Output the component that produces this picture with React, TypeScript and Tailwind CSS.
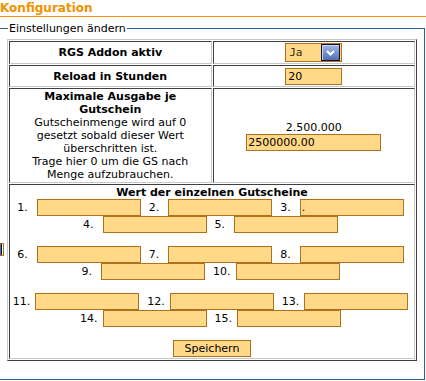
import React from "react";

const cellCls =
  "border border-t-[#404040] border-l-[#404040] border-r-[#c8c8c8] border-b-[#c8c8c8] p-[1px] text-center align-middle";

function Box({ cls, value }: { cls: string; value?: string }) {
  return (
    <div
      className={
        "h-[17px] border border-[#b0701c] bg-[#ffd987] pl-[1px] text-left text-[11px] leading-[15px] text-black whitespace-nowrap overflow-hidden " +
        cls
      }
    >
      {value}
    </div>
  );
}

export default function App() {
  const groups: (number[] | null)[] = [
    [1, 2, 3],
    [4, 5],
    null,
    [6, 7, 8],
    [9, 10],
    null,
    [11, 12, 13],
    [14, 15],
    null,
  ];
  return (
    <div className="relative w-[426px] h-[381px] overflow-hidden bg-white text-black font-['DejaVu_Sans',sans-serif] text-[11px] leading-[13px]">
      <div className="h-[17px] border-b border-[#f39100] pt-[1px] text-[12px] leading-[14px] font-bold text-[#f39100]">
        Konfiguration
      </div>
      <div className="relative mt-[11px] -ml-[2px] w-[427px] h-[352px] border border-[#2d5f94]">
        <div className="absolute -top-[7px] left-[9px] bg-white px-[1px] leading-[13px]">
          Einstellungen ändern
        </div>
        <table className="mt-[10px] ml-[8px] w-[410px] border-separate border-spacing-[1px] border border-t-[#c8c8c8] border-l-[#c8c8c8] border-r-[#404040] border-b-[#404040]">
          <tbody>
            <tr>
              <td className={cellCls + " w-1/2 font-bold"}>RGS Addon aktiv</td>
              <td className={cellCls + " w-1/2"}>
                <div className="mx-auto flex h-[19px] w-[57px] items-center border border-[#b0701c] bg-[#ffd987]">
                  <span className="flex-1 pl-[3px] text-left font-['DejaVu_Sans_Mono',monospace] text-[11px] leading-[13px] text-[#3a2a10]">
                    Ja
                  </span>
                  <div className="mr-[1px] flex h-[17px] w-[19px] items-center justify-center border border-[#101030] bg-linear-to-b from-[#a3b8e8] to-[#4f70b6] shadow-[inset_1px_1px_0_#c8d6f4]">
                    <svg width="9" height="6" viewBox="0 0 9 6">
                      <polyline
                        points="1,1 4.5,4.5 8,1"
                        fill="none"
                        stroke="#ffffff"
                        strokeWidth="2"
                      />
                    </svg>
                  </div>
                </div>
              </td>
            </tr>
            <tr>
              <td className={cellCls + " font-bold"}>Reload in Stunden</td>
              <td className={cellCls + " h-[22px]"}>
                <Box cls="mx-auto w-[57px] pl-[2px]" value="20" />
              </td>
            </tr>
            <tr>
              <td className={cellCls}>
                <div className="font-bold">
                  Maximale Ausgabe je
                  <br />
                  Gutschein
                </div>
                <div>
                  Gutscheinmenge wird auf 0
                  <br />
                  gesetzt sobald dieser Wert
                  <br />
                  überschritten ist.
                  <br />
                  Trage hier 0 um die GS nach
                  <br />
                  Menge aufzubrauchen.
                </div>
              </td>
              <td className={cellCls}>
                <div>2.500.000</div>
                <Box cls="mx-auto w-[135px]" value="2500000.00" />
              </td>
            </tr>
            <tr>
              <td className={cellCls} colSpan={2}>
                <div className="font-bold">Wert der einzelnen Gutscheine</div>
                {groups.map((g, gi) =>
                  g === null ? (
                    <div key={gi} className="h-[13px]" />
                  ) : (
                    <div key={gi} className="flex h-[17px] items-center justify-center pr-[3px]">
                      {g.map((n, i) => (
                        <React.Fragment key={n}>
                          <span
                            className={
                              (i > 0 ? "ml-[8px] " : "") +
                              (n < 10 ? "mr-[9px]" : "mr-[5px]")
                            }
                          >
                            {n}.
                          </span>
                          <Box cls="w-[104px]" value={n === 3 ? "." : ""} />
                        </React.Fragment>
                      ))}
                    </div>
                  )
                )}
                <div className="flex h-[17px] justify-center">
                  <div className="h-[17px] w-[78px] border border-[#b0701c] bg-[#ffd987] text-center text-[11px] leading-[15px]">
                    Speichern
                  </div>
                </div>
              </td>
            </tr>
          </tbody>
        </table>
      </div>
      <div className="absolute left-0 top-[243px] flex h-[13px] w-[4px] border-y border-r border-[#b0701c]">
        <div className="h-full w-[2px] border-r border-[#101030] bg-[#4f70b6]" />
      </div>
    </div>
  );
}
